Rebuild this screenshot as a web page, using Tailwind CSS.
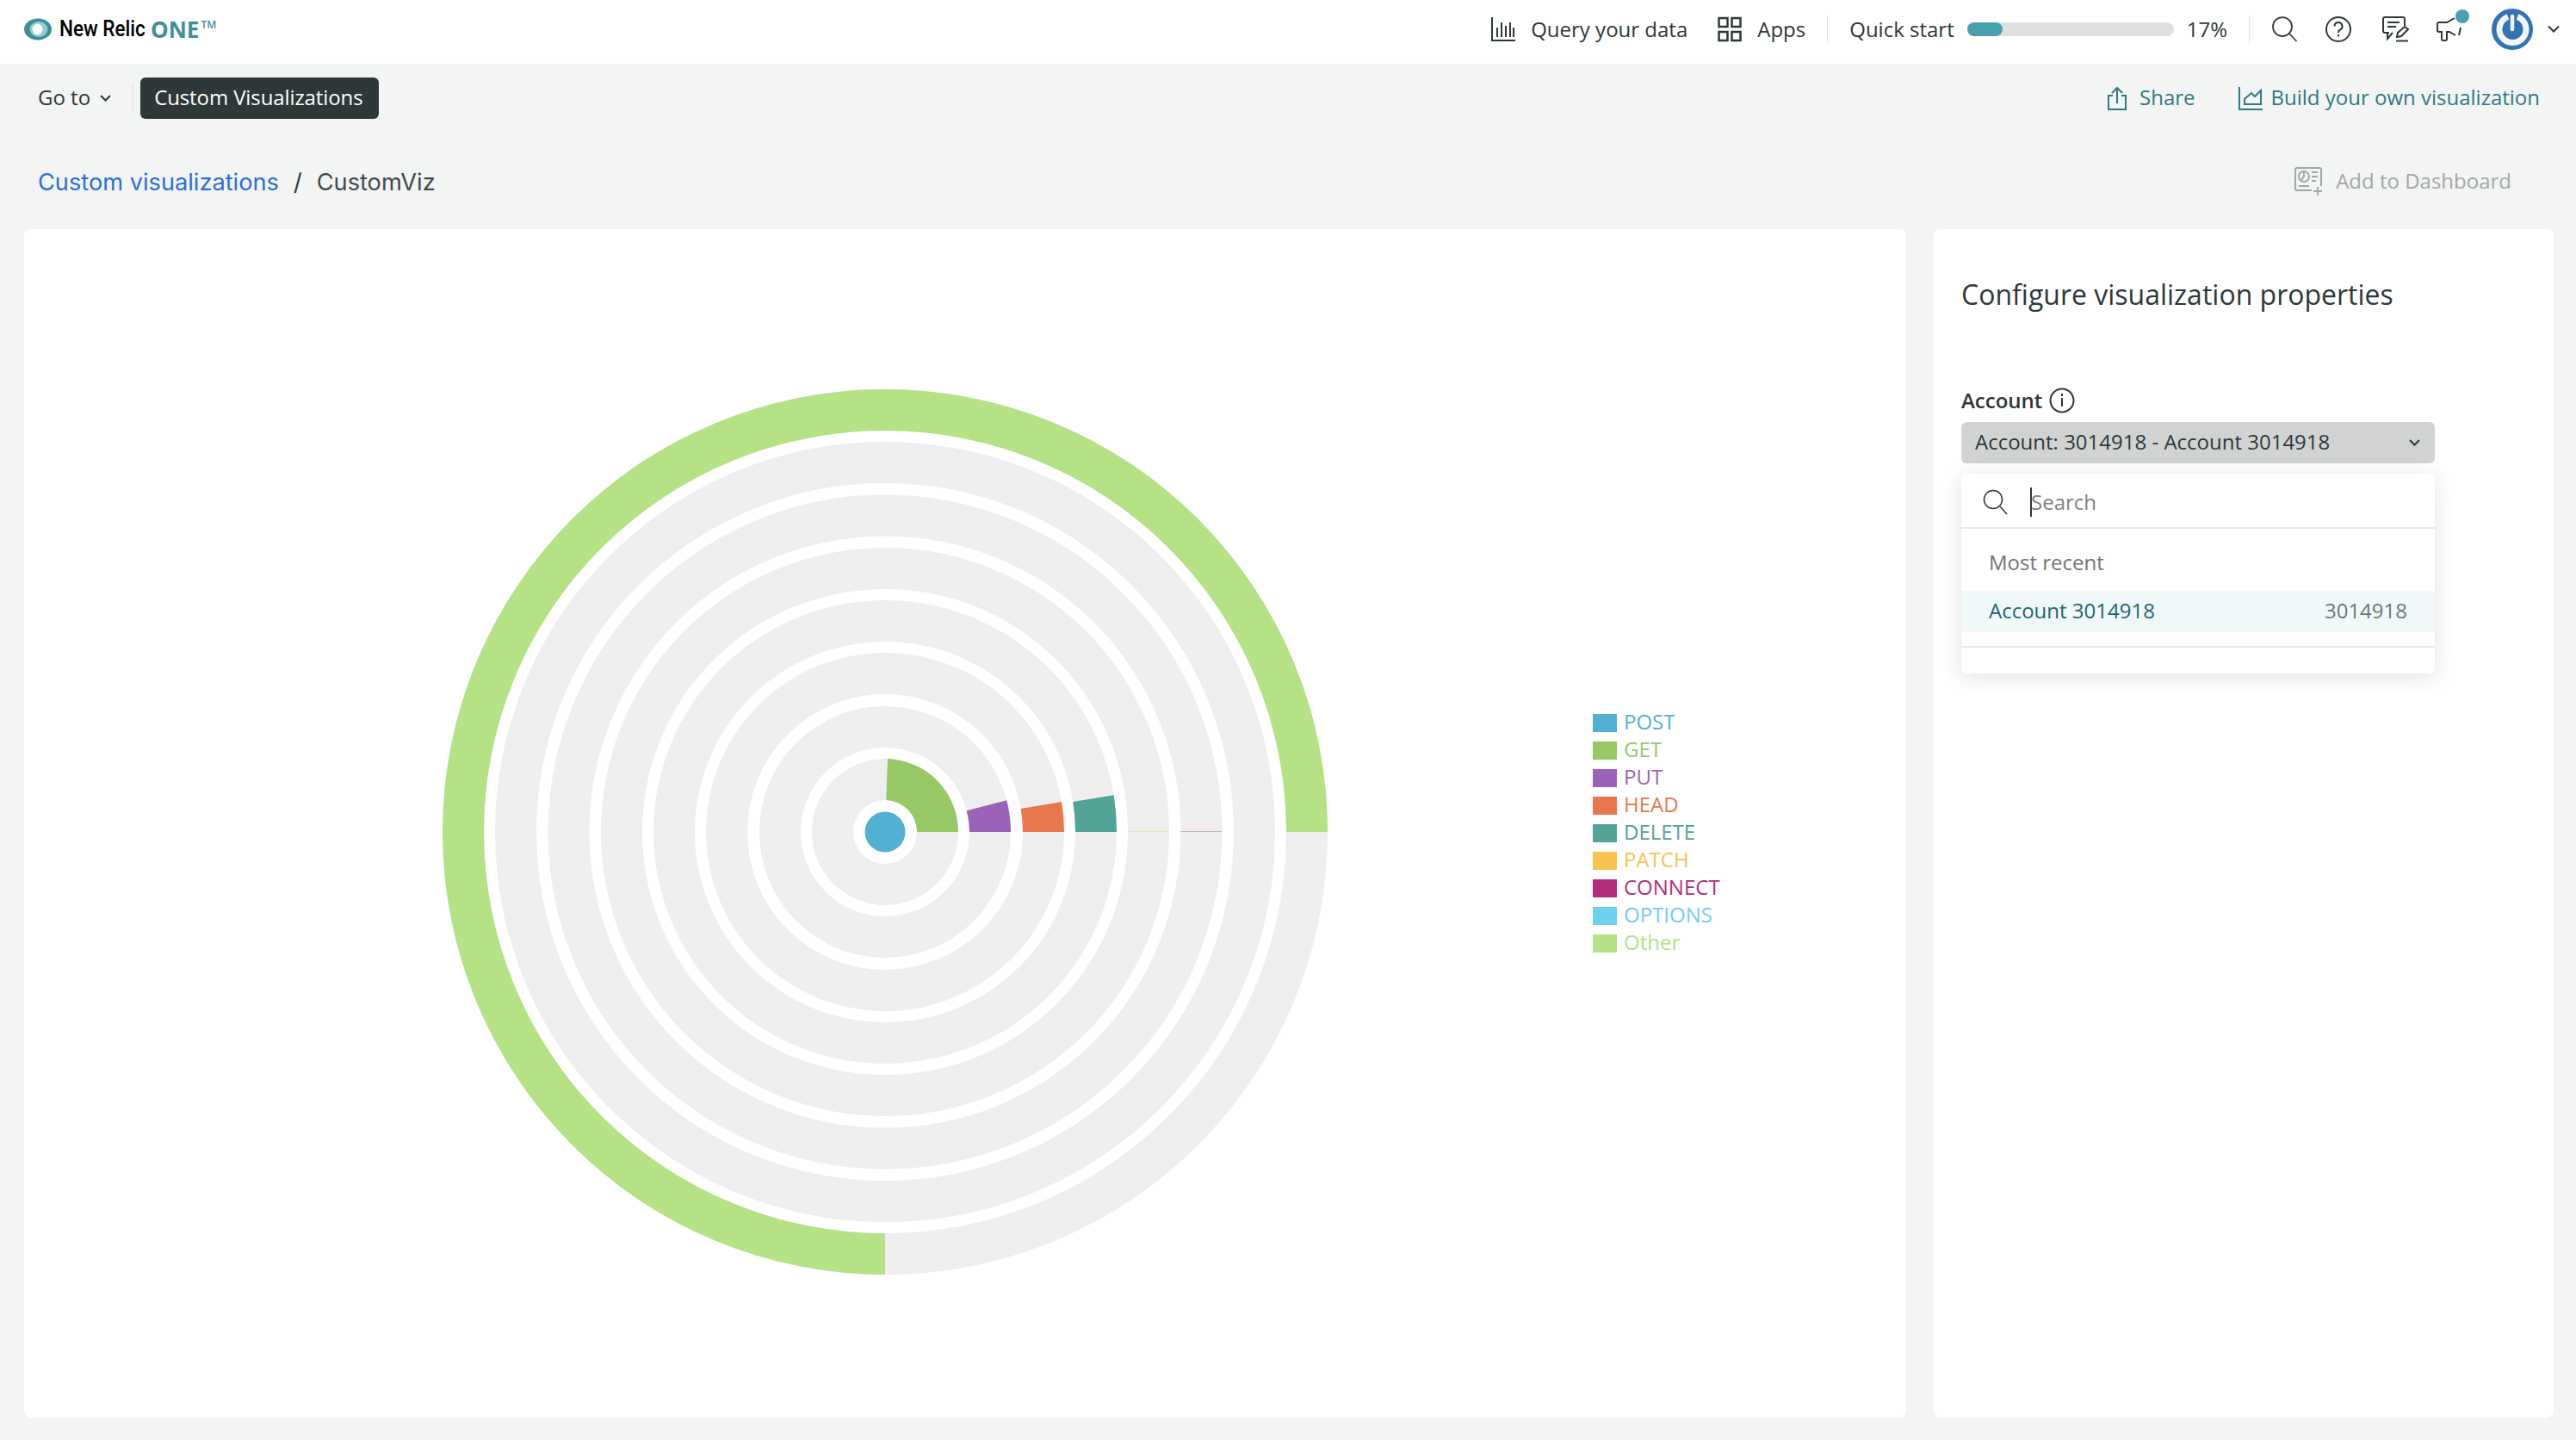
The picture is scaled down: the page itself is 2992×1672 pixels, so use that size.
<!DOCTYPE html>
<html lang="en">

<head>
    <meta charset="UTF-8">
    <script src="https://cdn.jsdelivr.net/npm/@tailwindcss/browser@4"></script>
    <title>CustomViz</title>
</head>

<body class="bg-[#f3f4f4] font-['Open_Sans',sans-serif] text-[#2e3838] overflow-hidden">
    <div class="w-[2992px] h-[1672px] flex flex-col">

        <!-- Top nav -->
        <header class="h-[74px] bg-white flex items-center justify-between pl-[28px] pr-[19px] pb-[6px] shrink-0">
            <div class="flex items-center">
                <svg width="32" height="26" viewBox="0 0 32 26">
                    <ellipse cx="16" cy="13" rx="16" ry="12.500" fill="#3f8e9c" />
                    <ellipse cx="17" cy="13" rx="10.500" ry="9" fill="#8fcbd0" />
                    <ellipse cx="15.500" cy="13" rx="6" ry="6.500" fill="#fff" />
                </svg>
                <span class="ml-[9px] w-[99px] inline-block whitespace-nowrap origin-left scale-x-[.9] font-['Roboto',sans-serif] font-medium text-[25px] text-black">New Relic</span>
                <span class="ml-[7px] text-[26px] font-bold text-[#3f8e9c] leading-none">ONE</span>
                <span class="ml-[2px] mb-[10px] text-[12px] font-semibold text-[#3f8e9c] leading-none">TM</span>
            </div>
            <div class="flex items-center text-[24px]">
                <svg width="28" height="30" viewBox="0 0 28 30" fill="none" stroke="#2e3838" stroke-width="2">
                    <path d="M1 1v27h27M7 13v11M12 7v17M17 11v13M22 7v17M26 13v11" />
                </svg>
                <span class="ml-[18px]">Query your data</span>
                <svg class="ml-[35px]" width="28" height="30" viewBox="0 0 28 30" fill="none" stroke="#2e3838" stroke-width="2.500">
                    <rect x="1.500" y="2" width="10" height="10" />
                    <rect x="16.500" y="2" width="10" height="10" />
                    <rect x="16.500" y="18" width="10" height="10" />
                    <rect x="1.500" y="18" width="10" height="10" />
                </svg>
                <span class="ml-[18px]">Apps</span>
                <div class="w-px h-[32px] bg-[#e3e4e4] ml-[25px]"></div>
                <span class="ml-[25px]">Quick start</span>
                <div class="ml-[15px] w-[240px] h-[16px] rounded-full bg-[#dfe0e1]">
                    <div class="w-[41px] h-full rounded-full bg-[#47a0af]"></div>
                </div>
                <span class="ml-[15px]">17%</span>
                <div class="w-px h-[32px] bg-[#e3e4e4] ml-[25px]"></div>
                <svg class="ml-[26px]" width="30" height="30" viewBox="0 0 30 30" fill="none" stroke="#2e3838" stroke-width="1.750">
                    <circle cx="12" cy="12" r="11" />
                    <path d="M20 20l8.500 9" />
                </svg>
                <svg class="ml-[32px]" width="30" height="30" viewBox="0 0 30 30" fill="none" stroke="#2e3838" stroke-width="2">
                    <circle cx="15" cy="15" r="14" />
                    <path d="M10.500 11.500a4.500 4.500 0 1 1 6.500 4c-1.500 .8-2 1.500-2 3.500M15 21v2.500" />
                </svg>
                <svg class="ml-[36px]" width="31" height="30" viewBox="0 0 31 30" fill="none" stroke="#2e3838" stroke-width="2">
                    <path d="M8 19H3a2 2 0 0 1-2-2V3a2 2 0 0 1 2-2h21a2 2 0 0 1 2 2v8M6 19v7l6-7M6 7h14M6 12h10" />
                    <path d="M17 24l1-5 8-7 4 3-8 8zM16 28.500h14" />
                </svg>
                <div class="relative ml-[32px] w-[38px] h-[28px]">
                    <svg width="30" height="28" viewBox="0 0 30 28" fill="none" stroke="#2e3838" stroke-width="2">
                        <path d="M21 1l-9 5H3a2 2 0 0 0-2 2v7a2 2 0 0 0 2 2h3v8a2 2 0 0 0 2 2h2a2 2 0 0 0 2-2v-8h3l7 4M28 12l-2 9" />
                    </svg>
                    <div class="absolute -top-[9px] right-0 w-[16px] h-[16px] rounded-full bg-[#47a0af]"></div>
                </div>
                <div class="ml-[26px] w-[48px] h-[48px] rounded-full bg-[#3373b3] flex items-center justify-center">
                    <svg width="48" height="48" viewBox="0 0 48 48" fill="none" stroke="#f4f5f6">
                        <path d="M19 9.500a15.500 15.500 0 1 0 11 0" stroke-width="7" />
                        <path d="M24 9v15" stroke-width="4.500" stroke-linecap="round" />
                    </svg>
                </div>
                <svg class="ml-[17px]" width="14" height="10" viewBox="0 0 14 10" fill="none" stroke="#2e3838" stroke-width="2">
                    <path d="M1 1.500l6 6 6-6" />
                </svg>
            </div>
        </header>

        <!-- Sub nav -->
        <div class="h-[48px] mt-[16px] flex items-center justify-between pl-[44px] pr-[42px] shrink-0">
            <div class="flex items-center h-full">
                <span class="text-[24px] text-[#2e3838] pb-[3px]">Go to</span>
                <svg class="ml-[11px]" width="13" height="9" viewBox="0 0 13 9" fill="none" stroke="#2e3838" stroke-width="2">
                    <path d="M1 1l5.500 5.500L12 1" />
                </svg>
                <div class="w-px h-[32px] bg-[#dcdddd] ml-[25px]"></div>
                <div class="ml-[8px] h-[48px] w-[277px] pl-[16px] pb-[3px] bg-[#2e3838] text-white rounded-[6px] text-[24px] font-medium tracking-[-0.1px] flex items-center whitespace-nowrap">Custom Visualizations</div>
            </div>
            <div class="flex items-center text-[24px] text-[#2f7a85]">
                <svg width="22" height="28" viewBox="0 0 22 28" fill="none" stroke="#2f7a85" stroke-width="2">
                    <path d="M6 11H1v16h20V11h-5M11 20V2M5 8l6-6 6 6" />
                </svg>
                <span class="ml-[15px] pb-[3px]">Share</span>
                <svg class="ml-[50px]" width="28" height="27" viewBox="0 0 28 27" fill="none" stroke="#2f7a85" stroke-width="2">
                    <path d="M1 0v26h27M7 20v-6l8-7 4 4 7-7v16z" />
                </svg>
                <span class="ml-[10px] pb-[3px]">Build your own visualization</span>
            </div>
        </div>

        <!-- Breadcrumb -->
        <div class="h-[44px] mt-[52px] flex items-center justify-between pl-[44px] pr-[75px] shrink-0">
            <div class="text-[27.2px] flex items-center font-['Inter',sans-serif]">
                <span class="text-[#2c6fd6]">Custom visualizations</span>
                <span class="ml-[17px]">/</span>
                <span class="ml-[17px] text-[#414a4a]">CustomViz</span>
            </div>
            <div class="flex items-center text-[24px] text-[#a3a7a7] -mt-[2px]">
                <svg width="34" height="34" viewBox="0 0 34 34" fill="none" stroke="#a3a7a7" stroke-width="2">
                    <path d="M20 27H3a2 2 0 0 1-2-2V3a2 2 0 0 1 2-2h26a2 2 0 0 1 2 2v19" />
                    <circle cx="11" cy="11" r="6" />
                    <path d="M11 5v6l-3 4M20 6h7M20 11h7M20 16h5M5 22h12" />
                    <path d="M27 23v10M22 28h10" />
                </svg>
                <span class="ml-[14px] pb-[2px]">Add to Dashboard</span>
            </div>
        </div>

        <!-- Panels -->
        <main class="flex-1 flex gap-[32px] pl-[28px] pr-[26px] pt-[32px] pb-[26px] min-h-0">

            <section class="w-[2186px] bg-white rounded-[8px] flex items-center">
                <svg class="ml-[485px] mt-[20px]" width="1030" height="1030" viewBox="-515 -515 1030 1030" fill="none">
                    <g stroke="#eeeeee" stroke-width="48">
                        <circle r="61" />
                        <circle r="122" />
                        <circle r="184" />
                        <circle r="245" />
                        <circle r="306" />
                        <circle r="367.500" />
                        <circle r="429" />
                        <circle r="490" />
                    </g>
                    <circle r="23.500" fill="#52b1d2" />
                    <path fill="#97c866" d="M85 0A85 85 0 0 0 2.970 -84.950L1.290 -36.980A37 37 0 0 1 37 0Z" />
                    <path fill="#9b63b8" d="M146 0A146 146 0 0 0 141.300 -36.800L94.800 -24.700A98 98 0 0 1 98 0Z" />
                    <path fill="#e9774d" d="M208 0A208 208 0 0 0 205 -35L157.700 -27A160 160 0 0 1 160 0Z" />
                    <path fill="#52a596" d="M269 0A269 269 0 0 0 265.600 -42.800L218.200 -35.100A221 221 0 0 1 221 0Z" />
                    <path stroke="#efdfb4" stroke-width="1" d="M282 -.5H330" />
                    <path stroke="#d4a9ca" stroke-width="1" d="M343 -.5H391" />
                    <path fill="#b4e285" d="M514 0A514 514 0 1 0 0 514L0 466A466 466 0 1 1 466 0Z" />
                </svg>
                <ul class="ml-[307px] mt-[20px] flex flex-col text-[24px] leading-[32px]">
                    <li class="flex items-center h-[32px] text-[#52b1d2]"><span class="w-[28px] h-[21px] mr-[8px] mt-[2px] bg-[#52b1d2]"></span>POST</li>
                    <li class="flex items-center h-[32px] text-[#97c866]"><span class="w-[28px] h-[21px] mr-[8px] mt-[2px] bg-[#97c866]"></span>GET</li>
                    <li class="flex items-center h-[32px] text-[#9b63b8]"><span class="w-[28px] h-[21px] mr-[8px] mt-[2px] bg-[#9b63b8]"></span>PUT</li>
                    <li class="flex items-center h-[32px] text-[#e9774d]"><span class="w-[28px] h-[21px] mr-[8px] mt-[2px] bg-[#e9774d]"></span>HEAD</li>
                    <li class="flex items-center h-[32px] text-[#52a596]"><span class="w-[28px] h-[21px] mr-[8px] mt-[2px] bg-[#52a596]"></span>DELETE</li>
                    <li class="flex items-center h-[32px] text-[#f7c44f]"><span class="w-[28px] h-[21px] mr-[8px] mt-[2px] bg-[#f7c44f]"></span>PATCH</li>
                    <li class="flex items-center h-[32px] text-[#b22d7e]"><span class="w-[28px] h-[21px] mr-[8px] mt-[2px] bg-[#b22d7e]"></span>CONNECT</li>
                    <li class="flex items-center h-[32px] text-[#6ecfee]"><span class="w-[28px] h-[21px] mr-[8px] mt-[2px] bg-[#6ecfee]"></span>OPTIONS</li>
                    <li class="flex items-center h-[32px] text-[#b4e285]"><span class="w-[28px] h-[21px] mr-[8px] mt-[2px] bg-[#b4e285]"></span>Other</li>
                </ul>
            </section>

            <aside class="w-[720px] bg-white rounded-[8px] pl-[32px] pt-[54px]">
                <h2 class="text-[32px] leading-[44px] text-[#2e3838]">Configure visualization properties</h2>
                <div class="mt-[84px] flex items-center gap-[8px]">
                    <span class="text-[24px] font-semibold leading-[34px]">Account</span>
                    <svg width="30" height="30" viewBox="0 0 30 30" fill="none" stroke="#2e3838" stroke-width="2">
                        <circle cx="15" cy="15" r="13.500" />
                        <path d="M15 12v10M15 7v3" />
                    </svg>
                </div>
                <div class="relative w-[550px] mt-[8px]">
                    <div class="h-[48px] rounded-[6px] bg-[#d1d3d3] flex items-center justify-between pl-[16px] pr-[17px] text-[24px]">
                        <span class="pb-[2px]">Account: 3014918 - Account 3014918</span>
                        <svg width="13" height="9" viewBox="0 0 13 9" fill="none" stroke="#2e3838" stroke-width="2">
                            <path d="M1 1l5.500 5.500L12 1" />
                        </svg>
                    </div>
                    <!-- Dropdown -->
                    <div class="absolute top-[60px] left-0 right-0 h-[232px] bg-white rounded-[6px] shadow-[0_4px_24px_rgba(0,0,0,0.12)] flex flex-col">
                        <div class="h-[64px] flex items-center pl-[25px] pt-[3px] border-b-2 border-[#e8e9e9] shrink-0">
                            <svg width="30" height="30" viewBox="0 0 30 30" fill="none" stroke="#2e3838" stroke-width="1.500">
                                <circle cx="12" cy="12" r="10.500" />
                                <path d="M20 20l8 9" />
                            </svg>
                            <div class="w-[2px] h-[34px] bg-[#2e3838] ml-[25px]"></div>
                            <span class="text-[24px] text-[#7b8282] -ml-[1px]">Search</span>
                        </div>
                        <div class="h-[72px] flex items-center pl-[32px] pt-[6px] text-[24px] text-[#6f7676] shrink-0">Most recent</div>
                        <div class="h-[48px] flex items-center justify-between pl-[32px] pr-[32px] pb-[2px] bg-[#f0f8fa] text-[24px] shrink-0">
                            <span class="text-[#1f6470]">Account 3014918</span>
                            <span class="text-[#6f7676]">3014918</span>
                        </div>
                        <div class="mt-[16px] border-t-2 border-[#e8e9e9]"></div>
                    </div>
                </div>
            </aside>
        </main>
    </div>
</body>

</html>
